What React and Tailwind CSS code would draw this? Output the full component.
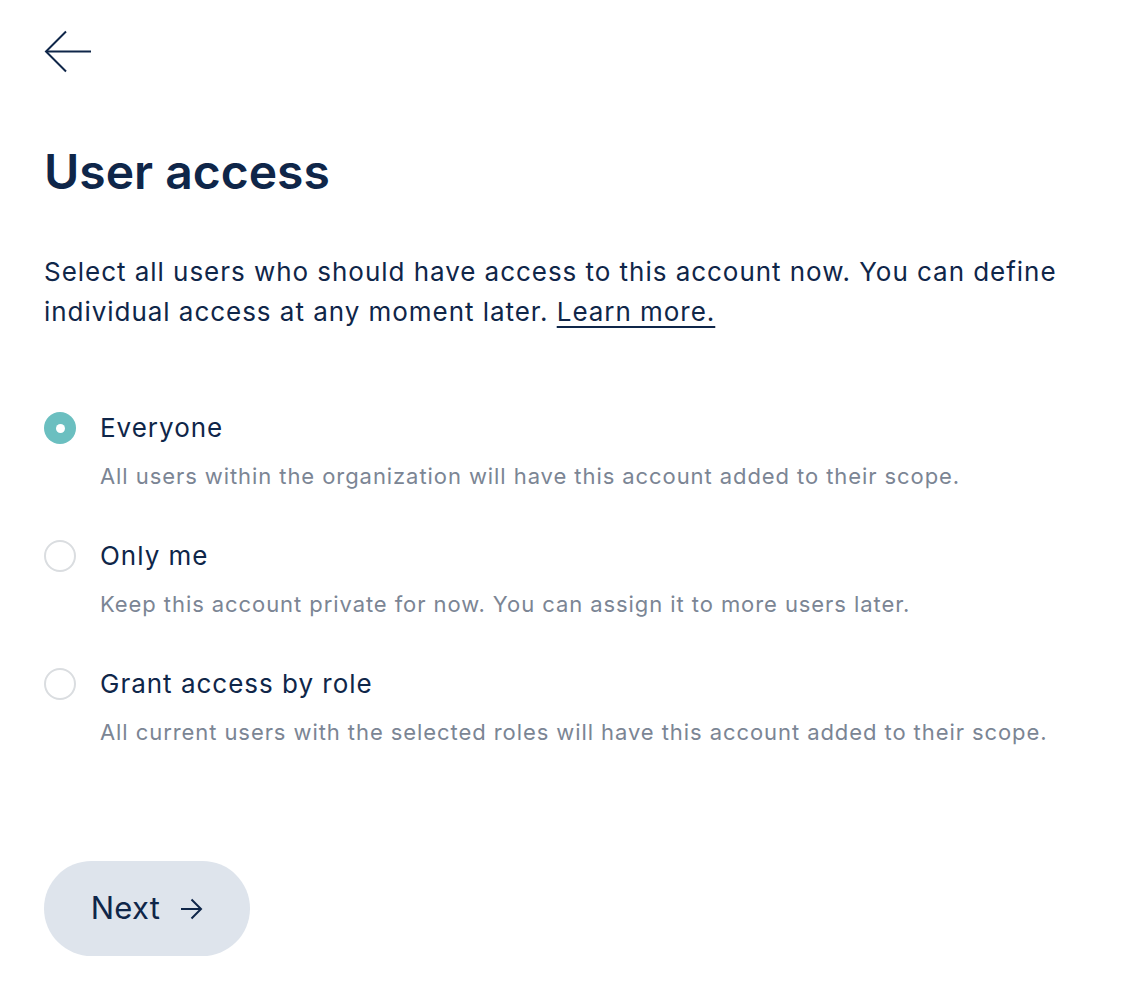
export default function App() {
  const options = [
    { title: "Everyone", desc: "All users within the organization will have this account added to their scope.", checked: true },
    { title: "Only me", desc: "Keep this account private for now. You can assign it to more users later.", checked: false },
    { title: "Grant access by role", desc: "All current users with the selected roles will have this account added to their scope.", checked: false },
  ];

  return (
    <div className="min-h-screen bg-white text-[#0f2649] font-['Inter',sans-serif] px-[44px] pt-[29px]">
      {/* Back */}
      <button className="block">
        <svg width="48" height="45" viewBox="0 0 48 45" fill="none" stroke="#0f2649" strokeWidth="2">
          <path d="M47 22.5H2" />
          <path d="M22 2.5L2 22.5L22 42.5" />
        </svg>
      </button>

      <h1 className="mt-[70px] text-[48px] leading-[56px] font-semibold">User access</h1>

      <p className="mt-[52px] text-[26px] leading-[40px] tracking-[0.037em] max-w-[1050px]">
        Select all users who should have access to this account now. You can define individual access at any moment
        later. <span className="underline underline-offset-[5px] decoration-[2px] cursor-pointer">Learn more.</span>
      </p>

      <div className="mt-[76px] flex flex-col gap-[40px]">
        {options.map((o) => (
          <div key={o.title} className="flex gap-[24px]">
            <div className="pt-[4px]">
              {o.checked ? (
                <div className="w-[32px] h-[32px] rounded-full bg-[#6bbfc0] flex items-center justify-center">
                  <div className="w-[9px] h-[9px] rounded-full bg-white" />
                </div>
              ) : (
                <div className="w-[32px] h-[32px] rounded-full border-2 border-[#dadde0] bg-white" />
              )}
            </div>
            <div>
              <div className="text-[26px] leading-[40px] tracking-[0.038em]">{o.title}</div>
              <div className="mt-[8px] text-[22px] leading-[40px] tracking-[0.042em] text-[#7b8594]">{o.desc}</div>
            </div>
          </div>
        ))}
      </div>

      <button className="mt-[109px] w-[206px] h-[95px] rounded-full bg-[#dee4ec] flex items-center justify-center gap-[19px] text-[31px] tracking-[0.01em]">
        <span>Next</span>
        <svg width="24" height="22" viewBox="0 0 24 22" fill="none" stroke="#0f2649" strokeWidth="2">
          <path d="M2 11H22" />
          <path d="M12.5 1.5L22 11L12.5 20.5" />
        </svg>
      </button>
    </div>
  );
}
